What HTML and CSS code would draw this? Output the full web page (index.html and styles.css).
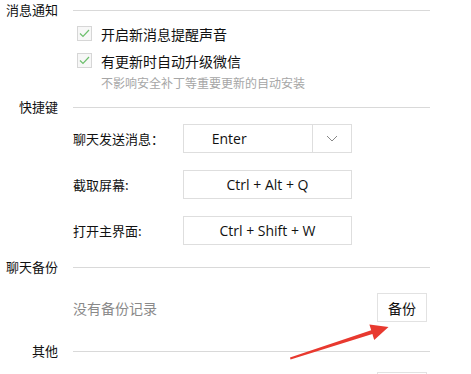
FILE: index.html
```html
<!DOCTYPE html>
<html lang="zh-CN">
<head>
    <meta charset="UTF-8">
    <title>设置</title>
    <link rel="stylesheet" href="styles.css">
</head>
<body>
    <div class="page">
        <div class="head head-1"><span class="head-title">消息通知</span><span class="head-line"></span></div>
        <div class="checks">
            <div class="check-row">
                <span class="box"><svg width="11" height="9" viewBox="0 0 11 9"><path d="M1 4.5 L4 7.5 L10 1" fill="none" stroke="#6cbf6c" stroke-width="1.2"/></svg></span>
                <span>开启新消息提醒声音</span>
            </div>
            <div class="check-row">
                <span class="box"><svg width="11" height="9" viewBox="0 0 11 9"><path d="M1 4.5 L4 7.5 L10 1" fill="none" stroke="#6cbf6c" stroke-width="1.2"/></svg></span>
                <span>有更新时自动升级微信</span>
            </div>
            <div class="hint">不影响安全补丁等重要更新的自动安装</div>
        </div>

        <div class="head head-2"><span class="head-title">快捷键</span><span class="head-line"></span></div>
        <div class="keys">
            <div class="key-row">
                <span class="key-label">聊天发送消息：</span>
                <div class="key-box key-select">
                    <span class="key-value">Enter</span>
                    <span class="key-arrow"><svg width="12" height="7" viewBox="0 0 12 7"><path d="M1 1 L6 6 L11 1" fill="none" stroke="#888" stroke-width="1"/></svg></span>
                </div>
            </div>
            <div class="key-row">
                <span class="key-label">截取屏幕:</span>
                <div class="key-box">Ctrl + Alt + Q</div>
            </div>
            <div class="key-row">
                <span class="key-label">打开主界面:</span>
                <div class="key-box">Ctrl + Shift + W</div>
            </div>
        </div>

        <div class="head head-3"><span class="head-title">聊天备份</span><span class="head-line"></span></div>
        <div class="backup">
            <span class="backup-text">没有备份记录</span>
            <button class="btn">备份</button>
        </div>

        <div class="head head-4"><span class="head-title">其他</span><span class="head-line"></span></div>
        <div class="other">
            <button class="btn"></button>
        </div>
    </div>

    <svg class="arrow" width="471" height="374" viewBox="0 0 471 374">
        <polygon points="290,357.5 371.2,330.2 369.4,324.5 388.5,327 374.2,340 372.4,334 290.5,359.5" fill="#e8392f"/>
    </svg>
</body>
</html>
```

FILE: styles.css
```css
body {
    margin: 0;
    background: #ffffff;
    font-family: "Noto Sans CJK SC", "Noto Sans", sans-serif;
    color: #111;
    overflow: hidden;
}

.page {
    width: 430px;
    height: 374px;
    padding-top: 3px;
    overflow: hidden;
}

/* section titles */
.head {
    display: flex;
    align-items: center;
    height: 14px;
}

.head-title {
    width: 58px;
    text-align: right;
    font-size: 13px;
    line-height: 14px;
    flex-shrink: 0;
}

.head-line {
    flex: 1;
    height: 1px;
    background: #d9d9d9;
    margin-left: 15px;
}

.head-2 { margin-top: 8px; }
.head-3 { margin-top: 15px; }
.head-4 { margin-top: 22px; }

/* checkboxes */
.checks {
    margin-top: 3px;
    padding-left: 77px;
}

.check-row {
    display: flex;
    align-items: center;
    height: 27px;
    font-size: 14px;
}

.box {
    width: 13px;
    height: 13px;
    border: 1px solid #d6d6d6;
    background: #f7f7f7;
    display: flex;
    align-items: center;
    justify-content: center;
    margin-right: 9px;
}

.hint {
    height: 18px;
    line-height: 18px;
    font-size: 12px;
    color: #a6a6a6;
    padding-left: 24px;
}

/* shortcuts */
.keys {
    margin-top: 10px;
    padding-left: 73px;
    display: flex;
    flex-direction: column;
    gap: 17px;
}

.key-row {
    display: flex;
    align-items: center;
    height: 29px;
}

.key-label {
    width: 110px;
    font-size: 13px;
}

.key-box {
    width: 167px;
    height: 27px;
    border: 1px solid #dedede;
    display: flex;
    align-items: center;
    justify-content: center;
    font-family: "Open Sans", sans-serif;
    font-size: 14px;
    color: #111;
}

.key-select {
    justify-content: flex-start;
}

.key-value {
    width: 129px;
    box-sizing: border-box;
    padding-right: 38px;
    text-align: center;
}

.key-arrow {
    width: 38px;
    height: 27px;
    border-left: 1px solid #dedede;
    display: flex;
    align-items: center;
    justify-content: center;
}

/* backup */
.backup {
    margin-top: 19px;
    padding-left: 73px;
    padding-right: 3px;
    display: flex;
    align-items: center;
    justify-content: space-between;
    height: 29px;
}

.backup-text {
    font-size: 14px;
    color: #8a8a8a;
}

.btn {
    width: 50px;
    height: 29px;
    border: 1px solid #e2e2e2;
    background: #fff;
    font-family: "Noto Sans CJK SC", sans-serif;
    font-size: 14px;
    color: #111;
    padding: 0;
}

.other {
    margin-top: 14px;
    padding-right: 3px;
    display: flex;
    justify-content: flex-end;
}

.arrow {
    position: absolute;
    left: 0;
    top: 0;
}
```
